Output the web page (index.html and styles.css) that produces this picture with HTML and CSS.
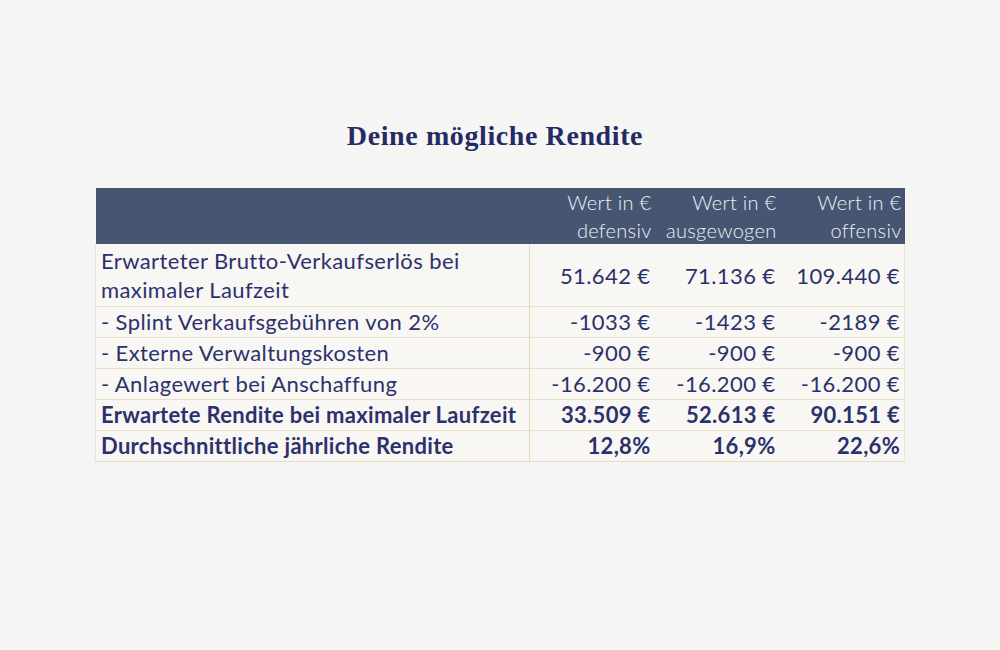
FILE: index.html
```html
<!DOCTYPE html>
<html lang="de">
<head>
<meta charset="utf-8">
<title>Deine mögliche Rendite</title>
<link rel="stylesheet" href="styles.css">
</head>
<body>
<main class="page">
  <h1 class="title">Deine mögliche Rendite</h1>
  <table class="returns">
    <colgroup>
      <col class="c-label">
      <col class="c-val">
      <col class="c-val">
      <col class="c-val">
    </colgroup>
    <thead>
      <tr>
        <th class="label"></th>
        <th>Wert in €<br>defensiv</th>
        <th>Wert in €<br>ausgewogen</th>
        <th>Wert in €<br>offensiv</th>
      </tr>
    </thead>
    <tbody>
      <tr class="tall">
        <td class="label">Erwarteter Brutto-Verkaufserlös bei maximaler Laufzeit</td>
        <td>51.642 €</td>
        <td>71.136 €</td>
        <td>109.440 €</td>
      </tr>
      <tr>
        <td class="label">- Splint Verkaufsgebühren von 2%</td>
        <td>-1033 €</td>
        <td>-1423 €</td>
        <td>-2189 €</td>
      </tr>
      <tr>
        <td class="label">- Externe Verwaltungskosten</td>
        <td>-900 €</td>
        <td>-900 €</td>
        <td>-900 €</td>
      </tr>
      <tr>
        <td class="label">- Anlagewert bei Anschaffung</td>
        <td>-16.200 €</td>
        <td>-16.200 €</td>
        <td>-16.200 €</td>
      </tr>
      <tr class="strong">
        <td class="label">Erwartete Rendite bei maximaler Laufzeit</td>
        <td>33.509 €</td>
        <td>52.613 €</td>
        <td>90.151 €</td>
      </tr>
      <tr class="strong">
        <td class="label">Durchschnittliche jährliche Rendite</td>
        <td>12,8%</td>
        <td>16,9%</td>
        <td>22,6%</td>
      </tr>
    </tbody>
  </table>
</main>
</body>
</html>
```

FILE: styles.css
```css
html, body {
  margin: 0;
  padding: 0;
  background: #f5f6f3;
}

.page {
  width: 1000px;
  height: 650px;
  display: flex;
  flex-direction: column;
  align-items: center;
  padding-top: 118px;
  box-sizing: border-box;
}

.title {
  margin: 0 0 34px -10px;
  font-family: "Liberation Serif", "Times New Roman", serif;
  font-weight: 700;
  font-size: 28px;
  letter-spacing: 0.6px;
  line-height: 36px;
  color: #262a63;
}

.returns {
  width: 808px;
  border-collapse: collapse;
  table-layout: fixed;
  font-family: "Lato", "Noto Sans", sans-serif;
  font-size: 22px;
  letter-spacing: 0.4px;
  color: #2c316d;
}

.c-label { width: 434px; }
.c-val { width: 125px; }

.returns th {
  background: #465672;
  color: #eef0f4;
  font-weight: 300;
  font-size: 20px;
  letter-spacing: 0.3px;
  text-align: right;
  line-height: 28px;
  padding: 0 3px 0 0;
  height: 56px;
  vertical-align: middle;
  white-space: nowrap;
}

.returns td {
  background: #f8f7f3;
  text-align: right;
  line-height: 30px;
  padding: 0 4px 0 0;
  border-bottom: 1px solid #e9dfc6;
  white-space: nowrap;
  font-weight: 400;
}

.returns td.label {
  text-align: left;
  padding: 0 0 0 5px;
  border-right: 1px solid #e6d9b8;
  border-left: 1px solid #e4e4e0;
  white-space: normal;
}

.returns td:last-child {
  border-right: 1px solid #ebe6d8;
}

.returns tr.tall td {
  line-height: 29px;
  padding-top: 2px;
  padding-bottom: 2px;
}

.returns tr.strong td {
  font-weight: 700;
  letter-spacing: 0.3px;
}
```
